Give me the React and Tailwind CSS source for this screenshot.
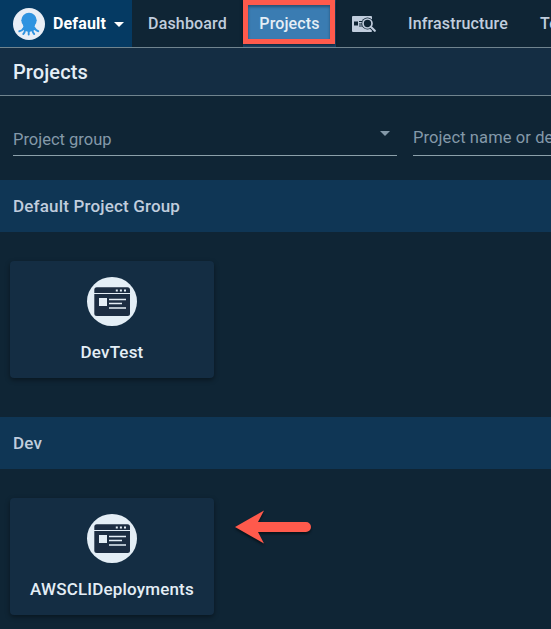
const label = "block whitespace-nowrap leading-5";

function Octopus() {
  return (
    <svg className="h-8 w-8 shrink-0" viewBox="0 0 32 32">
      <circle cx="16" cy="16" r="16" fill="#e9eef6" />
      <ellipse cx="16" cy="12.300" rx="7.700" ry="7.600" fill="#2f93e0" />
      <path d="M10 15.500h12.200l-.6 3 1.400 3-3 1.300-3.800 1.200-4-1-3-1.500 1.200-3z" fill="#2f93e0" />
      <path
        d="M10.500 20.500Q9 23 6.300 23.300M12.200 21.500Q11.800 24.500 10.300 26M15.700 21.500V26.500M19 21.500Q19.800 24.500 21.200 26M21.500 20Q23 22.800 25.300 23.200"
        fill="none"
        stroke="#2f93e0"
        strokeWidth="1.900"
        strokeLinecap="round"
      />
    </svg>
  );
}

function Caret({ className }) {
  return (
    <svg className={className} viewBox="0 0 10 5" preserveAspectRatio="none">
      <path d="M0 0h10L5 5z" fill="currentColor" />
    </svg>
  );
}

function SearchCardIcon() {
  return (
    <svg className="h-[18px] w-6" viewBox="0 0 24 18">
      <rect x="0" y="1" width="20" height="16" rx="1" fill="#c0cddd" />
      <rect x="2" y="6.500" width="4" height="4" fill="#0f2535" />
      <path d="M7 6.500h4M7 9h3M7 11h4" stroke="#0f2535" strokeWidth="1" />
      <circle cx="15.500" cy="8.500" r="6" fill="#0f2535" />
      <circle cx="15.500" cy="8.500" r="4.500" fill="none" stroke="#c0cddd" strokeWidth="1.700" />
      <path d="M18.800 12l4 4" stroke="#0f2535" strokeWidth="3.600" />
      <path d="M18.800 11.800l4 4" stroke="#c0cddd" strokeWidth="2.100" strokeLinecap="round" />
    </svg>
  );
}

function ProjectIcon() {
  return (
    <svg className="h-[50px] w-[50px] shrink-0" viewBox="0 0 50 50">
      <ellipse cx="25" cy="24.500" rx="25" ry="24.500" fill="#e4eef6" />
      <rect x="7.300" y="10.300" width="35.700" height="28.700" rx="2.500" fill="#1c2d42" />
      <path d="M7 16.500h36" stroke="#e4eef6" strokeWidth="1.200" />
      <rect x="12" y="21" width="8" height="8" fill="#e4eef6" />
      <path d="M22 22.500h17M22 26.500h13M22 31h17" stroke="#e4eef6" strokeWidth="1.300" />
      <path d="M28.800 13.500h2M32.900 13.500h2M37 13.500h2" stroke="#e4eef6" strokeWidth="2" />
    </svg>
  );
}

function ProjectCard({ name }) {
  return (
    <div className="flex h-[117px] w-[204px] flex-col items-center rounded bg-[#142d43] pt-4 shadow-[0_2px_5px_rgba(0,0,0,0.4)]">
      <ProjectIcon />
      <span className={label + " mt-[15px] text-[17px] font-medium tracking-[0.17px] text-[#e4eef6]"}>{name}</span>
    </div>
  );
}

function GroupHeader({ children }) {
  return (
    <h2 className="flex h-[52px] items-center bg-[#0f3655] pt-px pl-[13px] text-[17px] font-medium tracking-[0.17px] text-[#c0cddd]">
      {children}
    </h2>
  );
}

export default function App() {
  return (
    <div className="h-[629px] w-full overflow-hidden bg-[#0f2535] font-[Roboto,sans-serif]">
      <nav className="flex h-12 w-full overflow-hidden border-b border-[#70848f] text-[16px] font-medium tracking-[0.15px] text-[#c0cddd]">
        <div className="flex h-[47px] w-[132px] shrink-0 items-center bg-[#053a63] pt-px pl-[13px] text-white">
          <Octopus />
          <span className="ml-2 w-[53px] text-[16px] font-bold">Default</span>
          <Caret className="ml-2 h-[5px] w-[10px]" />
        </div>
        <div className="flex w-[111px] shrink-0 items-center justify-center">Dashboard</div>
        <div className="flex h-[47px] w-[93px] shrink-0 bg-[#1b4467]">
          <div className="flex h-11 w-[92px] items-center justify-center border-5 border-[#ff5a4c] bg-[#3a7cb2] pt-[3px] pl-px text-[#e4eef6] shadow-[0_1px_3px_rgba(0,0,0,0.5),inset_0_2px_3px_rgba(0,0,0,0.35)]">
            Projects
          </div>
        </div>
        <div className="flex w-[72px] shrink-0 items-center pl-4">
          <SearchCardIcon />
        </div>
        <span className="w-[132px] shrink-0 self-center">Infrastructure</span>
        <span className="shrink-0 self-center">Tenants</span>
      </nav>
      <header className="flex h-12 items-center border-b border-[#70848f] bg-[#142d43] pl-[13px]">
        <h1 className="text-[20px] font-medium tracking-[0.1px] text-[#e4eef6]">Projects</h1>
      </header>
      <div className="flex h-[84px] gap-4 overflow-hidden pl-[13px] text-[16.5px] text-[#8499a9]">
        <div className="flex h-[60px] w-[384px] shrink-0 justify-between border-b border-[#8ba0aa] pt-[34px]">
          <span className={label}>Project group</span>
          <Caret className="mt-px mr-[7px] h-[5px] w-[10px]" />
        </div>
        <div className="h-[60px] w-[300px] shrink-0 border-b border-[#8ba0aa] pt-8">
          <span className={label + " tracking-[0.1px]"}>Project name or description</span>
        </div>
      </div>
      <GroupHeader>Default Project Group</GroupHeader>
      <div className="h-[185px] pt-[29px] pl-2.5">
        <ProjectCard name="DevTest" />
      </div>
      <GroupHeader>Dev</GroupHeader>
      <div className="flex gap-5 pt-[29px] pl-2.5">
        <ProjectCard name="AWSCLIDeployments" />
        <svg className="mt-2.5 h-10 w-20 drop-shadow-[0_2px_1px_rgba(0,0,0,0.5)]" viewBox="0 0 80 40">
          <path d="M1 19L30 2.500 24 14h48a5 5 0 0 1 0 10H24l6 11.500z" fill="#ff5a4c" />
        </svg>
      </div>
    </div>
  );
}
